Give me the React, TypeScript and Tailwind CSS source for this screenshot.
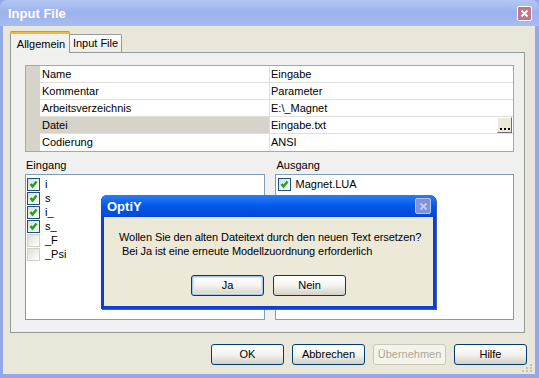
import React from "react";

function XpButton({ label, disabled, def, w = "w-[73px]" }: { label: string; disabled?: boolean; def?: boolean; w?: string }) {
  return (
    <div
      className={`${w} h-[21px] rounded-[3px] border flex items-center justify-center text-[11px] ${
        disabled
          ? "border-[#C9C7BA] text-[#ACA899] bg-[#F5F4EA]"
          : "border-[#003C74] text-black bg-gradient-to-b from-[#FFFFFF] via-[#F3F3EF] to-[#D6D0C5]"
      } ${def ? "shadow-[inset_0_0_0_1px_#A6C4EC,inset_0_0_0_2px_#CEE7FF]" : ""}`}
    >
      {label}
    </div>
  );
}

function Check({ checked }: { checked: boolean }) {
  if (checked) {
    return (
      <span className="w-[13px] h-[13px] shrink-0 border border-[#1C5180] bg-gradient-to-br from-[#DCDCD7] to-white flex items-center justify-center">
        <svg width="9" height="9" viewBox="0 0 9 9">
          <polyline points="1.5,4 3.5,6.5 7.5,1.5" fill="none" stroke="#21A121" strokeWidth="2.4" />
        </svg>
      </span>
    );
  }
  return <span className="w-[13px] h-[13px] shrink-0 border border-[#D2D1C6] bg-gradient-to-br from-[#DEDED8] to-white" />;
}

const rows = [
  ["Name", "Eingabe"],
  ["Kommentar", "Parameter"],
  ["Arbeitsverzeichnis", "E:\\_Magnet"],
  ["Datei", "Eingabe.txt"],
  ["Codierung", "ANSI"],
];

const inputs: [string, boolean][] = [
  ["i", true],
  ["s", true],
  ["i_", true],
  ["s_", true],
  ["_F", false],
  ["_Psi", false],
];

export default function App() {
  return (
    <div className="w-[539px] h-[378px] relative overflow-hidden bg-[#94A7E8] font-['Liberation_Sans',Arial,sans-serif] text-[11px] text-black leading-none">
      {/* Title bar */}
      <div className="h-[26px] flex items-center justify-between pl-[8px] pr-[7px] rounded-t-[7px] bg-gradient-to-b from-[#B3C6F4] via-[#9CB2EC] to-[#A7BCF0]">
        <span className="text-white font-bold text-[13px] mt-[1px]">Input File</span>
        <div className="w-[15px] h-[15px] rounded-[2px] border border-white bg-[#C37488] flex items-center justify-center">
          <svg width="9" height="9" viewBox="0 0 9 9">
            <path d="M1.5 1.5 L7.5 7.5 M7.5 1.5 L1.5 7.5" stroke="white" strokeWidth="1.8" />
          </svg>
        </div>
      </div>

      {/* Body */}
      <div className="ml-[3px] mr-[4px] h-[348px] bg-[#E8E7DA] pt-[6px] pl-[7px] pr-[10px] flex flex-col">
        {/* Tabs */}
        <div className="flex items-end h-[20px] relative z-10">
          <div className="w-[60px] h-[21px] -mb-[1px] bg-[#F1F1EE] border-x border-[#919B9C] relative flex items-center justify-center pt-[1px]">
            <div className="absolute -top-[1px] -left-[1px] -right-[1px] h-[3px] bg-[#F8B53A] rounded-t-[2px] border-t border-[#E68B2C]" />
            <span className="mt-[3px] ml-[2px]">Allgemein</span>
          </div>
          <div className="w-[52px] h-[18px] bg-gradient-to-b from-white to-[#ECEBE6] border-t border-r border-[#919B9C] rounded-tr-[2px] flex items-center justify-center">
            Input File
          </div>
        </div>

        {/* Panel */}
        <div className="w-[515px] h-[281px] border border-[#919B9C] bg-[#F0F0EE] pt-[12px] pl-[14px] flex flex-col">
          {/* Property grid */}
          <div className="w-[489px] border border-[#ACA899] bg-white flex">
            <div className="w-[14px] bg-[#D6D3CA]" />
            <div className="flex-1 flex flex-col">
              {rows.map(([k, v], i) => (
                <div key={k} className={`flex h-[17px] ${i < rows.length - 1 ? "border-b border-[#E0DFD9]" : ""}`}>
                  <div className={`w-[230px] pl-[2px] flex items-center border-r border-[#E0DFD9] ${k === "Datei" ? "bg-[#D6D3CA]" : ""}`}>{k}</div>
                  <div className="flex-1 pl-[1px] flex items-center justify-between">
                    <span>{v}</span>
                    {k === "Datei" && (
                      <div className="w-[15px] h-[16px] bg-[#ECE9D8] border border-t-white border-l-white border-r-[#716F64] border-b-[#716F64] flex items-end justify-center pb-[2px] gap-[2px] mr-[1px]">
                        <span className="w-[2px] h-[2px] bg-black" />
                        <span className="w-[2px] h-[2px] bg-black" />
                        <span className="w-[2px] h-[2px] bg-black" />
                      </div>
                    )}
                  </div>
                </div>
              ))}
            </div>
          </div>

          {/* Lists */}
          <div className="w-[489px] grid grid-cols-2 gap-x-[10px] mt-[4px]">
            <div className="h-[18px] pl-[1px] flex items-center">Eingang</div>
            <div className="h-[18px] pl-[2px] flex items-center">Ausgang</div>
            <div className="h-[146px] border border-[#7F9DB9] bg-white pt-[2px] pl-[1px] flex flex-col">
              {inputs.map(([n, c]) => (
                <div key={n} className="h-[14px] flex items-center gap-[5px]">
                  <Check checked={c} />
                  <span>{n}</span>
                </div>
              ))}
            </div>
            <div className="h-[146px] border border-[#7F9DB9] bg-white pt-[2px] pl-[2px] flex flex-col">
              <div className="h-[14px] flex items-center gap-[5px]">
                <Check checked />
                <span>Magnet.LUA</span>
              </div>
            </div>
          </div>
        </div>

        {/* Bottom buttons */}
        <div className="flex justify-end gap-[8px] mt-[11px] -mr-[2px]">
          <XpButton label="OK" />
          <XpButton label="Abbrechen" />
          <XpButton label="Übernehmen" disabled />
          <XpButton label="Hilfe" />
        </div>
        <div className="absolute right-[6px] bottom-[6px] grid grid-cols-3 gap-[1px] w-[11px]">
          <span />
          <span />
          <span className="w-[2px] h-[2px] bg-[#C5C2B2]" />
          <span />
          <span className="w-[2px] h-[2px] bg-[#C5C2B2]" />
          <span className="w-[2px] h-[2px] bg-[#C5C2B2]" />
          <span className="w-[2px] h-[2px] bg-[#C5C2B2]" />
          <span className="w-[2px] h-[2px] bg-[#C5C2B2]" />
          <span className="w-[2px] h-[2px] bg-[#C5C2B2]" />
        </div>
      </div>

      {/* Modal dialog */}
      <div className="absolute left-[101px] top-[195px] w-[335px] h-[114px] rounded-t-[6px] bg-[#0A3ED6] flex flex-col shadow-[1px_1px_0_#3E5EB9]">
        <div className="h-[22px] rounded-t-[6px] bg-gradient-to-b from-[#2A7CF8] via-[#0257E8] to-[#0348D8] flex items-center justify-between pl-[6px] pr-[5px]">
          <span className="text-white font-bold text-[13px] mt-[1px]">OptiY</span>
          <div className="w-[16px] h-[16px] rounded-[2px] border border-[#B7C6EE] bg-[#7E93D8] flex items-center justify-center">
            <svg width="9" height="9" viewBox="0 0 9 9">
              <path d="M1.5 1.5 L7.5 7.5 M7.5 1.5 L1.5 7.5" stroke="#C4CDEE" strokeWidth="1.8" />
            </svg>
          </div>
        </div>
        <div className="flex-1 mx-[3px] mb-[3px] bg-[#ECE9D8] flex flex-col">
          <div className="pl-[15px] pt-[13px] leading-[14px] tracking-[-0.08px]">
            <div>Wollen Sie den alten Dateitext durch den neuen Text ersetzen?</div>
            <div className="whitespace-pre"> Bei Ja ist eine erneute Modellzuordnung erforderlich</div>
          </div>
          <div className="flex justify-center gap-[9px] mt-[17px]">
            <XpButton label="Ja" def />
            <XpButton label="Nein" />
          </div>
        </div>
      </div>
    </div>
  );
}
